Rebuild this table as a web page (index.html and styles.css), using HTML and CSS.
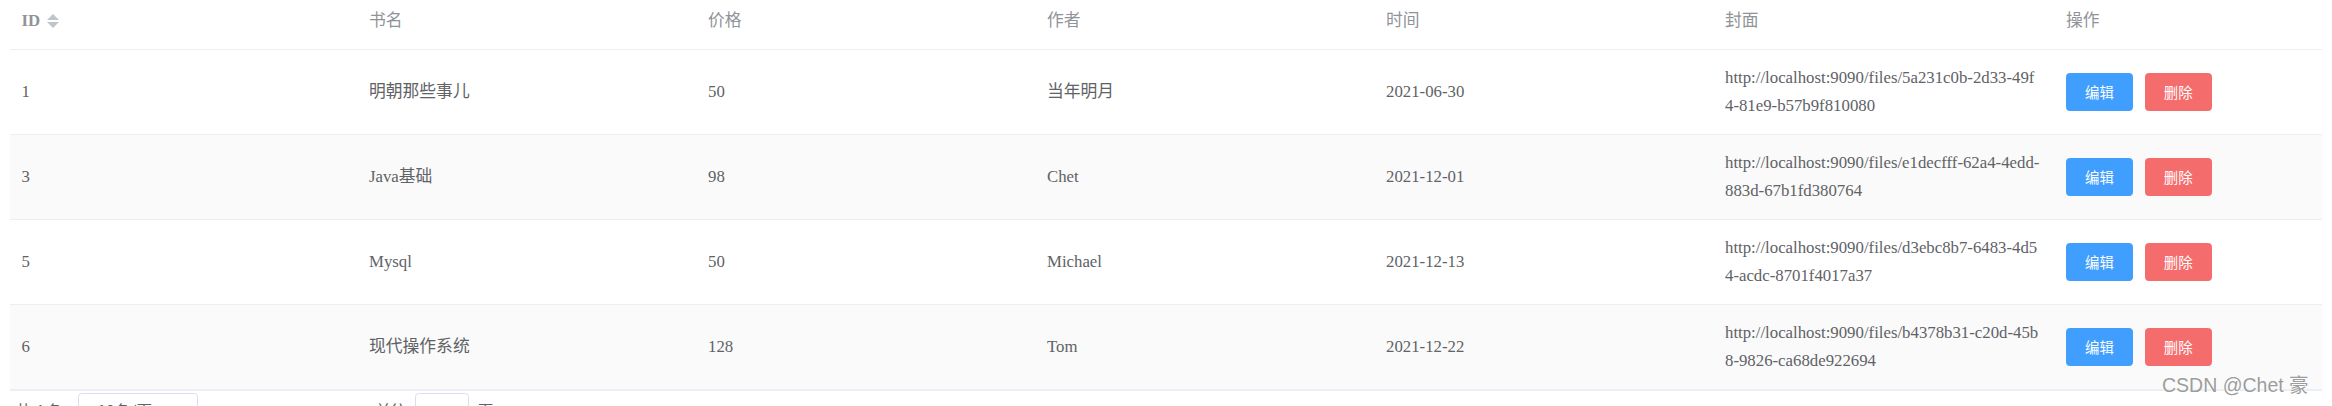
FILE: index.html
```html
<!DOCTYPE html>
<html lang="zh-CN">
<head>
<meta charset="utf-8">
<title>图书列表</title>
<link rel="stylesheet" href="styles.css">
</head>
<body>
<div class="table">
  <div class="row head">
    <div class="cell"><span class="id-title">ID</span><span class="caret"><i class="up"></i><i class="down"></i></span></div>
    <div class="cell">书名</div>
    <div class="cell">价格</div>
    <div class="cell">作者</div>
    <div class="cell">时间</div>
    <div class="cell">封面</div>
    <div class="cell">操作</div>
  </div>
  <div class="row">
    <div class="cell">1</div>
    <div class="cell">明朝那些事儿</div>
    <div class="cell">50</div>
    <div class="cell">当年明月</div>
    <div class="cell">2021-06-30</div>
    <div class="cell cover">http://localhost:9090/files/5a231c0b-2d33-49f4-81e9-b57b9f810080</div>
    <div class="cell ops"><button class="btn primary">编辑</button><button class="btn danger">删除</button></div>
  </div>
  <div class="row striped">
    <div class="cell">3</div>
    <div class="cell">Java基础</div>
    <div class="cell">98</div>
    <div class="cell">Chet</div>
    <div class="cell">2021-12-01</div>
    <div class="cell cover">http://localhost:9090/files/e1decfff-62a4-4edd-883d-67b1fd380764</div>
    <div class="cell ops"><button class="btn primary">编辑</button><button class="btn danger">删除</button></div>
  </div>
  <div class="row">
    <div class="cell">5</div>
    <div class="cell">Mysql</div>
    <div class="cell">50</div>
    <div class="cell">Michael</div>
    <div class="cell">2021-12-13</div>
    <div class="cell cover">http://localhost:9090/files/d3ebc8b7-6483-4d54-acdc-8701f4017a37</div>
    <div class="cell ops"><button class="btn primary">编辑</button><button class="btn danger">删除</button></div>
  </div>
  <div class="row striped last">
    <div class="cell">6</div>
    <div class="cell">现代操作系统</div>
    <div class="cell">128</div>
    <div class="cell">Tom</div>
    <div class="cell">2021-12-22</div>
    <div class="cell cover">http://localhost:9090/files/b4378b31-c20d-45b8-9826-ca68de922694</div>
    <div class="cell ops"><button class="btn primary">编辑</button><button class="btn danger">删除</button></div>
  </div>
</div>
<div class="pager">
  <span class="total">共 4 条</span>
  <span class="select">10条/页</span>
  <span class="nav"></span>
  <span class="jump">前往</span>
  <span class="jump-input"></span>
  <span class="jump-unit">页</span>
</div>
<div class="watermark">CSDN @Chet 豪</div>
</body>
</html>
```
FILE: styles.css
```css
html, body {
  background: #ffffff;
}
body {
  margin: 0;
  padding: 0 9.6px;
  font-family: "Liberation Serif", "Noto Sans CJK SC", serif;
  font-size: 16.8px;
  color: #606266;
  overflow: hidden;
}
.table {
  display: flex;
  flex-direction: column;
  border-bottom: 1px solid #ebeef5;
}
.row {
  display: grid;
  grid-template-columns: 347.4px 339px 339px 339px 339px 341px 1fr;
  border-bottom: 1px solid #ebeef5;
}
.row.striped {
  background: #fafafa;
}
.cell {
  display: flex;
  align-items: center;
  padding: 14.4px 12px;
  line-height: 27.6px;
  min-height: 55.2px;
}
.head .cell {
  color: #909399;
  padding: 7px 12px 14.4px;
  min-height: 0;
}
.id-title {
  font-weight: bold;
}
.cover {
  display: block;
  word-break: break-all;
}
.caret {
  display: inline-flex;
  flex-direction: column;
  justify-content: center;
  gap: 2px;
  width: 28.8px;
  height: 27.6px;
  padding-left: 7px;
  box-sizing: border-box;
}
.caret i {
  display: block;
  width: 0;
  height: 0;
  border-left: 6px solid transparent;
  border-right: 6px solid transparent;
}
.caret .up {
  border-bottom: 6px solid #c0c4cc;
}
.caret .down {
  border-top: 6px solid #c0c4cc;
}
.ops {
  gap: 12px;
}
.btn {
  height: 38.4px;
  padding: 0 18px;
  border-radius: 3.6px;
  border: 1px solid transparent;
  font-family: "Noto Sans CJK SC", sans-serif;
  font-size: 14.4px;
  line-height: 1;
  color: #ffffff;
}
.btn.primary {
  background: #409eff;
  border-color: #409eff;
}
.btn.danger {
  background: #f56c6c;
  border-color: #f56c6c;
}
.pager {
  display: flex;
  align-items: center;
  height: 33.6px;
  padding: 2px 6px;
  font-family: "Noto Sans CJK SC", sans-serif;
  font-size: 15.6px;
  color: #606266;
}
.total {
  margin-right: 16px;
}
.select {
  box-sizing: border-box;
  width: 120px;
  height: 33.6px;
  border: 1px solid #dcdfe6;
  border-radius: 3.6px;
  padding-left: 18px;
  display: flex;
  align-items: center;
}
.nav {
  margin-left: 12px;
  width: 165px;
  height: 33.6px;
}
.jump {
  margin-right: 8px;
}
.jump-input {
  box-sizing: border-box;
  width: 54px;
  height: 33.6px;
  border: 1px solid #dcdfe6;
  border-radius: 3.6px;
}
.jump-unit {
  margin-left: 9px;
}
.watermark {
  position: absolute;
  left: 2162px;
  top: 374px;
  font-family: "Liberation Sans", "Noto Sans CJK SC", sans-serif;
  font-size: 19.5px;
  line-height: 23px;
  color: #9c9c9c;
  text-shadow: 0 0 2px #ffffff, 0 0 1px #ffffff;
}
```
